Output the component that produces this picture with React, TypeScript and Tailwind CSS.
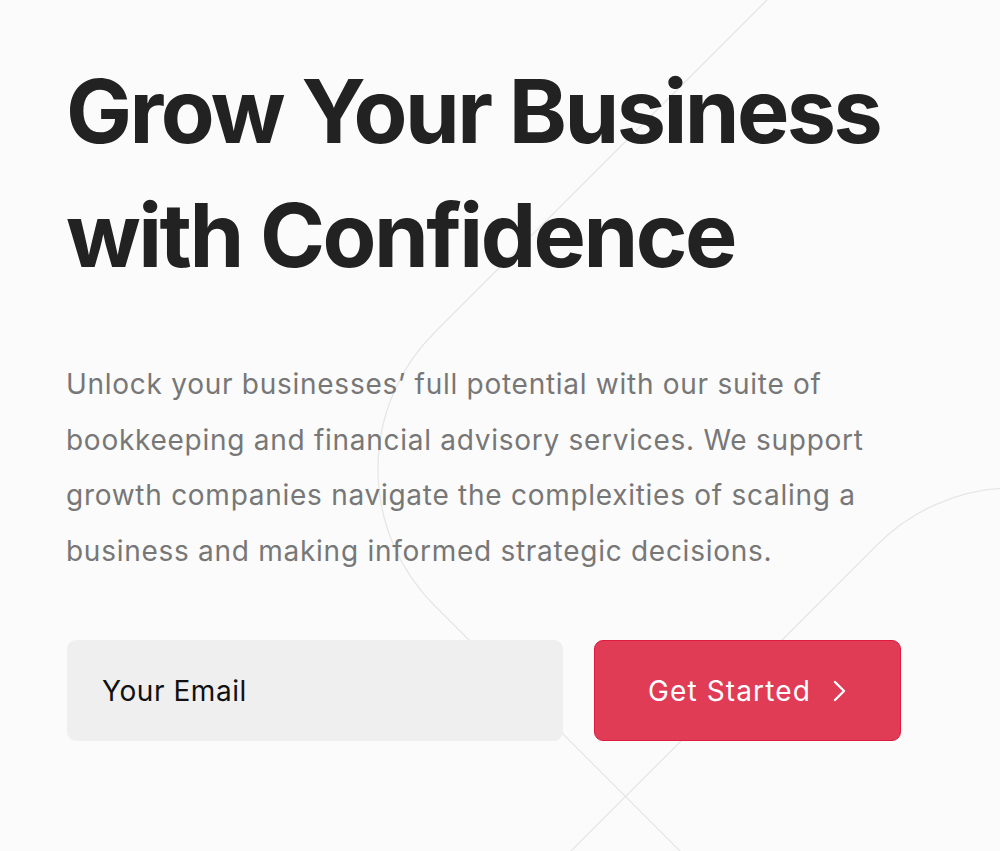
import React from "react";

export default function App() {
  return (
    <div className="relative w-[1000px] h-[851px] overflow-hidden bg-[#fbfbfb]" style={{ fontFamily: "Inter, 'Noto Sans', sans-serif" }}>
      <svg className="absolute inset-0 pointer-events-none" width="1000" height="851" viewBox="0 0 1000 851" fill="none">
        <path d="M 767 0 L 434.5 332.5 A 193 193 0 0 0 434.5 605.5 L 686 857" stroke="#e6e6e6" strokeWidth="1.3" />
        <path d="M 571 851 L 877.5 544.5 A 193 193 0 0 1 1150.5 544.5 L 1200 594" stroke="#e6e6e6" strokeWidth="1.3" />
      </svg>
      <div className="relative flex flex-col pl-[67px] pt-[49px]">
        <h1 className="-ml-[1px] text-[88px] leading-[124px] font-bold tracking-[-0.029em] text-[#222222]">
          Grow Your Business
          <br />
          with Confidence
        </h1>
        <p className="-ml-[1px] mt-[60px] text-[28px] leading-[55.5px] text-[#777777] tracking-[0.026em]">
          Unlock your businesses’ full potential with our suite of
          <br />
          bookkeeping and financial advisory services. We support
          <br />
          growth companies navigate the complexities of scaling a
          <br />
          business and making informed strategic decisions.
        </p>
        <div className="mt-[61px] flex gap-[31px]">
          <div className="w-[496px] h-[101px] rounded-[9px] bg-[#efefef] flex items-center pl-[35px] text-[28px] tracking-[0.02em] text-[#111111]">
            Your Email
          </div>
          <button className="w-[307px] h-[101px] rounded-[9px] bg-[#e03c56] border border-[#e0193f] flex items-center justify-center gap-[22px] text-[28px] tracking-[0.04em] text-white">
            <span>Get Started</span>
            <svg width="14" height="24" viewBox="0 0 14 24" fill="none">
              <path d="M2 3 L11 12 L2 21" stroke="white" strokeWidth="2.4" strokeLinecap="round" strokeLinejoin="round" />
            </svg>
          </button>
        </div>
      </div>
    </div>
  );
}
